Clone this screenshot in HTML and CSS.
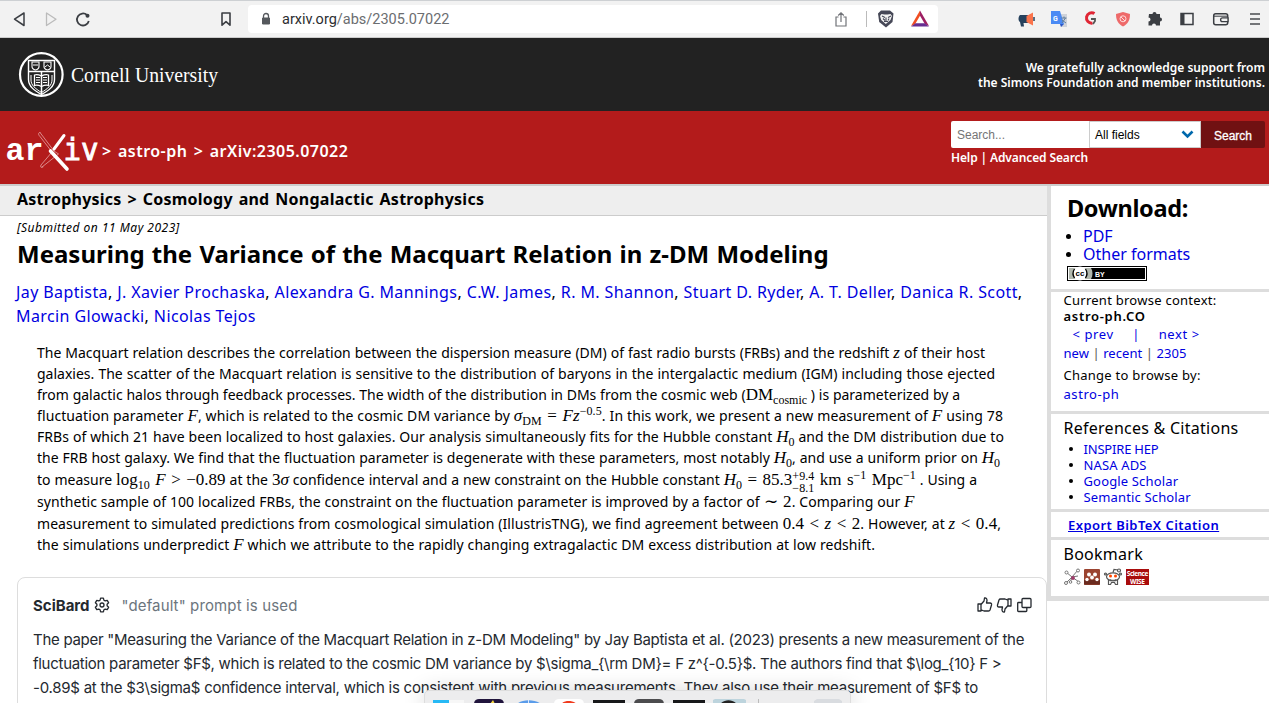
FILE: index.html
```html
<!DOCTYPE html>
<html lang="en">
<head>
<meta charset="utf-8">
<title>Measuring the Variance of the Macquart Relation in z-DM Modeling</title>
<link rel="stylesheet" href="styles.css">
</head>
<body>
<div class="toolbar">
  <svg class="nav-icons" width="240" height="36" viewBox="0 1 240 36" fill="none" stroke="#3b3e43" stroke-width="1.7" stroke-linejoin="round">
    <path d="M24 13v12.500L14.500 19.200z" stroke-width="1.500"/>
    <path d="M46.500 13v12.500L56 19.200z" stroke="#bbb" stroke-width="1.300"/>
    <path d="M87 15a6 6 0 1 0 1.800 6" stroke-width="1.800"/><circle cx="87.500" cy="15.700" r="2" fill="#3b3e43" stroke="none"/>
    <path d="M222 13h8v12.200l-4-3.500-4 3.500z" stroke-width="1.600"/>
  </svg>
  <div class="address">
    <svg width="10" height="14" viewBox="0 0 10 14"><path d="M1.500 6h7v6h-7z" fill="#55585d" stroke="#55585d" stroke-linejoin="round"/><path d="M2.500 6V4a2.500 2.500 0 0 1 5 0v2" fill="none" stroke="#55585d" stroke-width="1.300"/></svg>
    <div class="url">arxiv.org<span>/abs/2305.07022</span></div>
    <svg class="address-icons" width="110" height="28" viewBox="828 5 110 28" fill="none">
      <path d="M838.500 17h-2.500v9h10v-9h-2.500M841 22v-9m-2.800 2.500 2.800-2.700 2.800 2.700" stroke="#707277" stroke-width="1.200"/>
      <path d="M866.500 11v16" stroke="#bbb"/>
      <path d="M881 10.500h9l3.500 3-1 8.500-6.500 5.500-6.800-5.500-1.200-8.500z" fill="#464857"/>
      <path d="M881.500 14l3 .5h3l3-.5 1.500 2-1.500 4-4.700 4-4.600-4-1.200-4z" fill="#f3f3f3"/>
      <path d="M882 16l3 1.500m6-1.500-3 1.500m-2 0v4m-2 0h4m-5-3 2 2m4-2-1 2" stroke="#464857" stroke-width="1.100"/>
      <path d="M920 10.500 911 26l4-1.800 5-8.500z" fill="#f04e23"/><path d="M920 10.500 929 26l-4-1.800-5-8.500z" fill="#9e1f63"/><path d="M911 26.500h18l-4.500-3.200h-9z" fill="#662d91"/>
    </svg>
  </div>
  <svg class="extensions" width="260" height="28" viewBox="1009 5 260 28" fill="none">
    <path d="M1028 15v8h-4.500l.5 3.500h-3l-1-4.500c-2-1-2-5 0-7z" fill="#26415d"/><path d="M1026.500 16l6.500-3.500v13l-6.500-3.500z" fill="#fb744c"/><path d="M1034 17v4" stroke="#26415d" stroke-width="1.500"/>
    <path d="M1056 14h11v13h-6z" fill="#cfd3da"/><path d="M1051 11h9l4 13h-13z" fill="#4a8af4"/><path d="M1060 24h4l-3 3z" fill="#2a56c6"/><text x="1053" y="20.500" class="gt">G</text><path d="M1061.500 18h5m-2.500-1.500V18m1.500 0-3.500 5m0-3 4 3" stroke="#607d9b"/>
    <path d="M1094.500 13.600a5.200 5.200 0 1 0-2 9.500" stroke="#e02635" stroke-width="3"/><path d="M1091 19h4v2l-2 3" stroke="#555" stroke-width="1.800"/>
    <path d="M1123 12l7 2c0 6-2 10-7 12.500-5-2.500-7-6.500-7-12.500z" fill="#ee6a6a"/><circle cx="1123" cy="18.800" r="3" stroke="#ffdada"/><path d="M1121 17l4 4" stroke="#ffdada"/>
    <path d="M1149 14h3.500a2 2 0 1 1 4 0h3.500v3.500a2 2 0 1 1 0 4v4h-4a2 2 0 1 0-4 0h-3.500v-4a2 2 0 1 0 0-4z" fill="#3b3e43"/>
    <path d="M1181 13.500h12v11h-12z" stroke="#3b3e43" stroke-width="1.500"/><path d="M1181 13.500h3.500v11h-3.500z" fill="#3b3e43"/>
    <rect x="1213.700" y="13.700" width="14" height="11" rx="2" stroke="#3b3e43" stroke-width="1.500"/><path d="M1214 16.200h13" stroke="#3b3e43"/><path d="M1228 17.800h-5.500a1.700 1.700 0 0 0 0 3.800h5.500z" fill="#f2f2f2" stroke="#3b3e43" stroke-width="1.300"/>
    <path d="M1250 14h10m-10 5h10m-10 5h10" stroke="#4a4c50" stroke-width="1.600"/>
  </svg>
</div>

<header class="cornell">
  <svg width="220" height="50" viewBox="14 50 220 50" fill="none" stroke="#fff">
    <circle cx="41.300" cy="74.500" r="21.300" stroke-width="2.200"/>
    <path d="M28.500 60.500h26v19c0 7-6 11-13 15-7-4-13-8-13-15z" stroke-width="1.400"/>
    <path d="M28.500 71.500h26M41.500 72v22" stroke-width="1.500"/>
    <path d="M32 62h7v4.500c0 2-1.500 3-3.500 3.500-2-.5-3.500-1.500-3.500-3.500zM44 62h7v4.500c0 2-1.500 3-3.500 3.500-2-.5-3.500-1.500-3.500-3.500z" stroke-width="1.100"/>
    <path d="M33 65h5M45 67l2.500-2 2.500 2"/>
    <path d="M34.500 75c2.500-1 5 0 7 1 2-1 4.500-2 7-1v10.500c-2.500-1-5 0-7 1-2-1-4.500-2-7-1z" stroke-width="1.300"/>
    <path d="M36 77.500h4m-4 2.500h4m-4 2.500h4m3-5h4m-4 2.500h4m-4 2.500h4M31 75v5c0 5 4 8.500 10.500 12.500C48 88.500 52 85 52 80v-5" stroke-width="1"/>
    <text x="71" y="82" class="cornell-name" textLength="147" lengthAdjust="spacingAndGlyphs">Cornell University</text>
  </svg>
  <div class="support">We gratefully acknowledge support from<br>the Simons Foundation and member institutions.</div>
</header>

<div class="masthead">
  <div class="crumbs">
    <svg width="96" height="44" viewBox="5 130 96 44">
      <text x="5.500" y="159.500" class="logo-ar" textLength="38" lengthAdjust="spacingAndGlyphs">ar</text>
      <text x="63.500" y="159.500" class="logo-iv" textLength="35" lengthAdjust="spacingAndGlyphs">iv</text>
      <g fill="none" stroke-linecap="round"><path d="M40 132.500 54 151l4.500 3L42 167M40 132.500c-2 0-2 2 0 4L52 152 41 165c-1 2 0 3 2 2" stroke="#e3a3a3" stroke-width=".8"/><path d="M64 135.500 54 149" stroke="#fff" stroke-width="3"/><path d="M50.500 151 67 169" stroke="#fff" stroke-width="3.600"/></g>
    </svg>
    <span class="crumb-text">&gt; astro-ph &gt; arXiv:2305.07022</span>
  </div>
  <div class="search">
    <div class="search-row">
      <div class="field">Search...</div>
      <div class="select">All fields<svg width="13" height="9" viewBox="0 0 13 9" fill="none" stroke="#0068ac" stroke-width="2.600"><path d="M1.500 1.500l5 5 5-5"/></svg></div>
      <div class="button">Search</div>
    </div>
    <div class="help">Help | Advanced Search</div>
  </div>
</div>

<main class="page">
  <div class="content">
    <div class="subject">Astrophysics &gt; Cosmology and Nongalactic Astrophysics</div>
    <div class="dateline">[Submitted on 11 May 2023]</div>
    <h1 class="title">Measuring the Variance of the Macquart Relation in z-DM Modeling</h1>
    <div class="authors">
      <div><a>Jay Baptista</a>, <a>J. Xavier Prochaska</a>, <a>Alexandra G. Mannings</a>, <a>C.W. James</a>, <a>R. M. Shannon</a>, <a>Stuart D. Ryder</a>, <a>A. T. Deller</a>, <a>Danica R. Scott</a>,</div>
      <div><a>Marcin Glowacki</a>, <a>Nicolas Tejos</a></div>
    </div>
    <div class="abstract">
      <div class="l1">The Macquart relation describes the correlation between the dispersion measure (DM) of fast radio bursts (FRBs) and the redshift <i>z</i> of their host</div>
      <div class="l2">galaxies. The scatter of the Macquart relation is sensitive to the distribution of baryons in the intergalactic medium (IGM) including those ejected</div>
      <div class="l3">from galactic halos through feedback processes. The width of the distribution in DMs from the cosmic web (<b>DM<sub>cosmic</sub></b> ) is parameterized by a</div>
      <div class="l4">fluctuation parameter <i>F</i>, which is related to the cosmic DM variance by <b><i>σ</i><sub>DM</sub> = <i>Fz</i><sup>−0.5</sup></b>. In this work, we present a new measurement of <i>F</i> using 78</div>
      <div class="l5">FRBs of which 21 have been localized to host galaxies. Our analysis simultaneously fits for the Hubble constant <b><i>H</i><sub>0</sub></b> and the DM distribution due to</div>
      <div class="l6">the FRB host galaxy. We find that the fluctuation parameter is degenerate with these parameters, most notably <b><i>H</i><sub>0</sub></b>, and use a uniform prior on <b><i>H</i><sub>0</sub></b></div>
      <div class="l7">to measure <b>log<sub>10</sub> <i>F</i> &gt; −0.89</b> at the <b>3<i>σ</i></b> confidence interval and a new constraint on the Hubble constant <b><i>H</i><sub>0</sub> = 85.3<span class="stack"><span>+9.4</span><span>−8.1</span></span> km s<sup>−1</sup> Mpc<sup>−1</sup></b> . Using a</div>
      <div class="l8">synthetic sample of 100 localized FRBs, the constraint on the fluctuation parameter is improved by a factor of <b>∼ 2</b>. Comparing our <i>F</i></div>
      <div class="l9">measurement to simulated predictions from cosmological simulation (IllustrisTNG), we find agreement between <b>0.4 &lt; <i>z</i> &lt; 2</b>. However, at <b><i>z</i> &lt; 0.4</b>,</div>
      <div class="l10">the simulations underpredict <i>F</i> which we attribute to the rapidly changing extragalactic DM excess distribution at low redshift.</div>
    </div>
    <section class="card">
      <div class="card-head">
        <strong>SciBard</strong>
        <svg class="gear" width="16" height="16" viewBox="0 0 16 16" fill="none" stroke="#24292f" stroke-width="1.300" stroke-linejoin="round"><path d="M6.600 1.200h2.800l.5 2 1.300.7 2-.6 1.400 2.400-1.500 1.500v1.600l1.500 1.500-1.400 2.400-2-.6-1.300.7-.5 2H6.600l-.5-2-1.300-.7-2 .6-1.400-2.400 1.500-1.500V7.200L1.400 5.700l1.400-2.400 2 .6 1.300-.7z"/><circle cx="8" cy="8" r="2"/></svg>
        <span class="muted">"default" prompt is used</span>
        <svg class="actions" width="56" height="16" viewBox="0 0 56 16" fill="none" stroke="#24292f" stroke-width="1.300" stroke-linejoin="round">
          <path d="M1 7h3v7H1zM4 7.500 7 4l.5-3c2-.3 2.500 1 2.500 2.500L9.500 6H13c1.500 0 1.700 1 1.500 2L13 13c-.3.800-.8 1-1.500 1H7l-3-1.200"/>
          <path d="M34 2h-3v7h3zM31 8.500 28 12l-.5 3c-2 .3-2.500-1-2.500-2.500L25.500 10H22c-1.500 0-1.700-1-1.500-2L22 3c.3-.8.8-1 1.500-1H28l3 1.200"/>
          <rect x="45" y="1.500" width="9" height="9" rx="1"/><path d="M45 5.500h-3.500a.8.800 0 0 0-.8.800v7.400c0 .5.300.8.800.8H49c.5 0 .8-.3.800-.8v-3.200"/>
        </svg>
      </div>
      <div class="card-body">
        <div>The paper "Measuring the Variance of the Macquart Relation in z-DM Modeling" by Jay Baptista et al. (2023) presents a new measurement of the</div>
        <div>fluctuation parameter $F$, which is related to the cosmic DM variance by $\sigma_{\rm DM}= F z^{-0.5}$. The authors find that $\log_{10} F &gt;</div>
        <div class="c3">-0.89$ at the $3\sigma$ confidence interval, which is consistent with previous measurements. They also use their measurement of $F$ to</div>
      </div>
    </section>
  </div>

  <aside class="side">
    <section class="download">
      <h2>Download:</h2>
      <ul><li><a>PDF</a></li><li><a>Other formats</a></li></ul>
      <svg class="cc" width="80" height="15" viewBox="0 0 80 15"><path d="M0 0h80v15H0z"/><path d="M1 1h78v13H1z" fill="#fff"/><path d="M2 2h76v11H2z"/><path d="M2 2h22c2 3 2 8 0 11H2z" fill="#b1b8ae"/><circle cx="13" cy="7.500" r="7" fill="#fff"/><path d="M7.500 3c-2 3-2 6 0 9M18.500 3c2 3 2 6 0 9" fill="none" stroke="#000" stroke-width="1.300"/><text x="8.500" y="10.200" class="cc-mark">cc</text><text x="28" y="10.500" class="cc-by">BY</text></svg>
    </section>
    <section class="browse">
      <div class="t1">Current browse context:</div>
      <strong>astro-ph.CO</strong>
      <div class="prevnext"><a>&lt; prev</a><i>|</i><a>next &gt;</a></div>
      <div class="new"><a>new</a> | <a>recent</a> | <a>2305</a></div>
      <div class="change">Change to browse by:</div>
      <div class="astro"><a>astro-ph</a></div>
    </section>
    <section class="refs">
      <h3>References &amp; Citations</h3>
      <ul><li class="r1"><a>INSPIRE HEP</a></li><li><a>NASA ADS</a></li><li><a>Google Scholar</a></li><li><a>Semantic Scholar</a></li></ul>
    </section>
    <section class="export"><a>Export BibTeX Citation</a></section>
    <section class="bookmark">
      <h3>Bookmark</h3>
      <svg width="86" height="18" viewBox="0 0 86 18" fill="none">
        <g stroke="#777"><path d="M2 4l6 5 6-7M8 9l-6 6M8 9l7 5M8 9l-2 6M8 9l6-1"/><g fill="#fff"><circle cx="2.500" cy="4.500" r="1.500"/><circle cx="14" cy="2.500" r="1.500"/><circle cx="2" cy="15" r="1.500"/><circle cx="6.500" cy="14" r="1.300"/><circle cx="14.500" cy="14.500" r="1.500"/></g></g><circle cx="9" cy="10" r="1.900" fill="#a03a6a"/>
        <rect x="20" y="1" width="16" height="16" rx="1" fill="#9b4431"/><path d="M20 12h16v4.500H20z" fill="#6b2b1f"/><g fill="#fff"><circle cx="25" cy="6.500" r="2"/><circle cx="31" cy="6.500" r="2"/><circle cx="23" cy="11.500" r="1.700"/><circle cx="28" cy="9.500" r="1.900"/><circle cx="33" cy="11.500" r="1.700"/></g>
        <g stroke="#555" stroke-width="1.200"><path d="M44.500 12v4.500h2l1-2h3l1 2h2V12"/><ellipse cx="49" cy="8.800" rx="6.500" ry="4" fill="#fff"/><path d="M49 4.500 50 1.500l4 .5"/><circle cx="55" cy="2.500" r="1.500"/><circle cx="41.500" cy="6" r="1"/><circle cx="56.500" cy="6" r="1"/><path d="M46 11.500c2 1 4 1 6 0" stroke-width=".8"/></g><circle cx="46.500" cy="8" r="1.500" fill="#ff4500"/><circle cx="51.500" cy="8" r="1.500" fill="#ff4500"/>
        <path d="M62 1h23v16H62z" fill="#a90c0c"/><text x="62.800" y="8" class="sw" textLength="21.500">Science</text><text x="66" y="15.500" class="sw" textLength="15">WISE</text>
      </svg>
    </section>
  </aside>
</main>

<div class="dock">
  <svg width="426" height="14" viewBox="424 689 426 14">
    <path d="M432 699h16v4h-16z" fill="#27b9f5"/><path d="M448 699h15v4h-15z" fill="#f7f7f7"/>
    <path d="M473 703c0-3 2-5 5-5h20c3 0 5 2 5 5z" fill="#20143c"/><path d="M489 703l3-4 2 4z" fill="#f5d742"/>
    <path d="M516 703c5-5 18-5 24 0z" fill="#5a9cea"/><path d="M527.500 699v4" stroke="#dceaff"/>
    <path d="M553 703c0-3 2-5 5-5h20c3 0 5 2 5 5z" fill="#fff"/><path d="M560 703c4-4 11-4 16 0z" fill="#f03a1d"/>
    <path d="M592 699h32v4h-32zM672 699h32v4h-32z" fill="#17181a"/>
    <path d="M633 703c0-3 2-5 5-5h20c3 0 5 2 5 5z" fill="#4c4c4e"/>
    <path d="M712 703v-4l2-1h29l2 1v4z" fill="#bdd4dd"/><path d="M719 703c5-5 12-5 17 0z" fill="#222"/>
    <path d="M757.500 698v5" stroke="#bbb"/><path d="M813 703v-3l3-2h22l3 2v3z" fill="#d9dce0"/>
  </svg>
</div>
</body>
</html>
```
FILE: styles.css
```css
*{box-sizing:border-box}
body{margin:0;width:1269px;height:703px;overflow:hidden;position:relative;background:#fff;color:#000;font-family:"Noto Sans",sans-serif;font-size:13px;white-space:nowrap}
svg{display:block;flex:none}
a{color:#0000e0}
ul{margin:0;padding:0;list-style:none}
h1,h2,h3{margin:0}

.toolbar{display:flex;height:38px;background:#f2f2f2;border-top:1px solid #cdd0d3;border-bottom:1px solid #ccc}
.address{display:flex;align-items:center;width:690px;height:28px;margin:4px 71px 0 8px;padding-left:13px;background:#fff;border-radius:4px}
.url{margin-left:11px;font:14.5px Roboto,sans-serif;color:#2b2d30}
.url span{color:#6b6d70}
.address-icons{margin-left:auto}
.extensions{margin-top:4px}
.gt{font:bold 7px Roboto,sans-serif;fill:#fff}

.cornell{display:flex;justify-content:space-between;height:73px;padding:12px 4px 0 14px;background:#222}
.cornell-name{font:21px "Liberation Serif",serif;fill:#fff;stroke:none}
.support{padding-top:10px;color:#fff;font-weight:600;font-size:12px;line-height:15px;text-align:right}

.masthead{display:flex;justify-content:space-between;height:73px;padding:10px 4px 0 5px;background:#b31b1b;color:#fff}
.crumbs{display:flex;padding-top:9px}
.logo-ar{font:bold 32px "Liberation Mono",monospace;fill:#fff}
.logo-iv{font:30px "DejaVu Sans Mono",monospace;fill:#fff;stroke:#fff;stroke-width:.9px}
.crumb-text{padding:10px 0 0 1px;font-weight:600;font-size:16px;line-height:22px;letter-spacing:.48px;word-spacing:1.7px}
.search{width:314px}
.search-row{display:flex;height:27px;font:12px "Liberation Sans",sans-serif}
.field{width:138px;padding:7px 6px;background:#fff;color:#757575;border-radius:2px 0 0 2px}
.select{display:flex;align-items:center;justify-content:space-between;width:112px;padding:0 6px 0 5px;background:#fff;border:1px solid #ccc;color:#000}
.button{width:64px;padding-top:8px;background:#701112;text-align:center;border-radius:0 2px 2px 0;-webkit-text-stroke:.3px #fff}
.help{padding-top:1px;font-weight:600;font-size:12px;line-height:18px;letter-spacing:-.12px}

.page{display:flex;align-items:flex-start;border-top:2px solid #ccc}
.content{width:1047px;flex:none}
.subject{height:30px;padding-left:17px;background:#eee;border-bottom:1px solid #ccc;font-weight:700;font-size:16px;line-height:27px;letter-spacing:.25px;word-spacing:1.4px}
.dateline{padding-left:17px;font-style:italic;font-size:12px;line-height:23px;letter-spacing:.5px}
.title{padding-left:17px;font-size:24px;line-height:30px;letter-spacing:0;word-spacing:.95px}
.authors{padding:11px 0 0 16px;font-size:16px;line-height:24px;letter-spacing:.395px}

.abstract{padding:14px 0 0 37px;font-size:14px;line-height:21px}
.abstract>div{height:21px;white-space:normal;text-align:justify;text-align-last:justify}
.abstract i,.abstract b{font-family:"Liberation Serif",serif;font-weight:400;font-size:17px;line-height:0}
.abstract b{white-space:nowrap;word-spacing:1px}
.abstract b i{font-size:inherit}
.abstract .l1{width:948px}
.abstract .l2{width:958px}
.abstract .l3{width:923px}
.abstract .l4{width:966px;letter-spacing:.1px}
.abstract .l5{width:967px;letter-spacing:.06px}
.abstract .l6{width:963px;letter-spacing:.02px}
.abstract .l7{width:940px;height:23px;line-height:23px}
.abstract .l8{width:877.5px;height:22px;line-height:22px;letter-spacing:.05px}
.abstract .l9{width:964px;line-height:22px;letter-spacing:.05px}
.abstract .l10{width:838px;letter-spacing:.05px}
sub,sup{font-size:12px;line-height:0}
sub{vertical-align:-4px}
sup{vertical-align:6px}
.stack{display:inline-flex;flex-direction:column;height:0;justify-content:center;font-size:12px;line-height:12px;vertical-align:5px}

.card{width:1030px;height:140px;margin:22px 0 0 17px;padding:15px;border:1px solid #ddd;border-radius:8px;font-family:Inter,sans-serif;font-size:15px;color:#24292f}
.card-head{display:flex;align-items:center;height:24px}
.gear{margin:0 12px 0 4px}
.muted{color:#6c757d;letter-spacing:.13px}
.actions{margin-left:auto;margin-right:-1.5px}
.card-body{padding-top:11px;line-height:24px;letter-spacing:-.28px}
.c3{letter-spacing:-.25px}

.side{width:222px;height:415px;flex:none;border:solid #ddd;border-width:0 0 5px 4px}
.side section{border-bottom:3px solid #ddd}
.side .download{height:106px;padding:7px 0 0 16px;font-size:16px}
.download h2{font-size:23.500px;line-height:30px;letter-spacing:-.35px}
.download ul{padding:4px 0 0 16px;line-height:18px}
li{position:relative}
li::before{content:"";position:absolute;left:-17px;top:50%;width:5px;height:5px;margin-top:-2px;border-radius:50%;background:#000}
.cc{margin-top:3px}
.cc-mark{font:bold 8px "Liberation Sans",sans-serif}
.cc-by{font:bold 7px "Liberation Sans",sans-serif;fill:#fff}
.side .browse{height:122px;padding:0 0 0 12.500px}
.browse{letter-spacing:.26px;line-height:17px}
.browse strong{display:block;line-height:15px;letter-spacing:.7px;font-weight:600}
.prevnext{display:flex;padding-left:9px;line-height:20px;letter-spacing:.6px}
.prevnext i{width:45px;text-align:center;font-style:normal;color:#0000e0}
.new{line-height:18px;letter-spacing:.07px;color:#555}
.change{padding-top:3px;line-height:20px}
.astro{line-height:19px;letter-spacing:.57px}
.side .refs{height:98px;padding:2px 0 0 12.500px}
.side h3{font-weight:400;font-size:16px;line-height:25px;letter-spacing:.26px}
.refs ul{padding-left:20px;line-height:16px;letter-spacing:.15px}
.refs li::before{width:4px;height:4px;left:-15px}
.refs .r1{letter-spacing:-.19px}
.side .export{height:28px;padding-left:17px;font-weight:600;line-height:26px;letter-spacing:.45px;text-decoration:underline;text-decoration-color:#0000e0}
.side .bookmark{height:56px;padding:2px 0 0 12.500px;border:0}
.bookmark svg{margin-top:1px}
.sw{font:bold 6.500px "Noto Sans",sans-serif;fill:#fff}

.dock{position:absolute;left:424px;top:690px;width:427px;height:16px;background:#ededee;border:1px solid #ddd;border-radius:5px 5px 0 0;box-shadow:0 2px 22px rgba(0,0,0,.2)}
.dock svg{margin-top:-1px}
```
